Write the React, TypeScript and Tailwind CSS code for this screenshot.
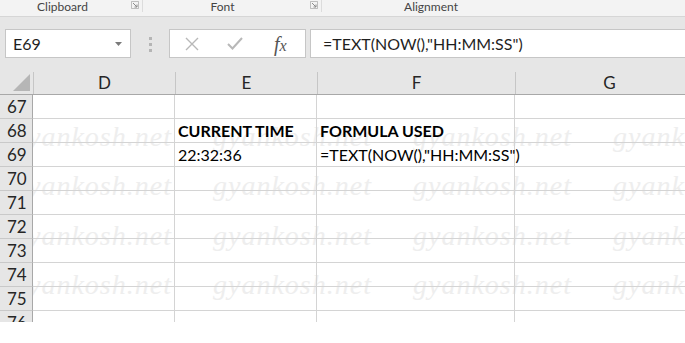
import React from "react";

const rows = [67, 68, 69, 70, 71, 72, 73, 74, 75, 76];
const marks = [137, 186, 236, 285, 334];

function Launcher() {
  return (
    <svg width="8" height="8" viewBox="0 0 8 8" className="text-[#8a8a8a]">
      <path d="M0.5 0.5h7v7h-7z" fill="none" stroke="currentColor" strokeWidth="1" opacity="0.5" />
      <path d="M2 2l4 4M6 3.5V6H3.5" fill="none" stroke="currentColor" strokeWidth="1" />
    </svg>
  );
}

export default function App() {
  return (
    <div className="w-[685px] h-[343px] overflow-hidden bg-white font-['Lato','Liberation_Sans',sans-serif] text-[#1f1f1f]">
      {/* ribbon group labels */}
      <div className="h-[17px] flex bg-[#f3f3f3] border-b border-[#d6d6d6] text-[12px] leading-[13px] text-[#444]">
        <div className="w-[143px] flex items-start border-r border-[#dcdcdc] h-[12px]">
          <span className="flex-1 text-center pr-[6px]">Clipboard</span>
          <span className="pr-[3px] pt-[1px]"><Launcher /></span>
        </div>
        <div className="w-[179px] flex items-start border-r border-[#dcdcdc] h-[12px]">
          <span className="flex-1 text-center pr-[8px]">Font</span>
          <span className="pr-[3px] pt-[1px]"><Launcher /></span>
        </div>
        <div className="w-[218px] text-center">Alignment</div>
      </div>

      {/* name box + formula bar */}
      <div className="h-[55px] bg-[#e6e6e6] flex items-start pt-[12px]">
        <div className="ml-[5px] w-[126px] h-[29px] bg-white border border-[#c6c6c6] flex items-center pl-[7px] pr-[8px] text-[16px]">
          <span className="flex-1">E69</span>
          <svg width="7" height="4" viewBox="0 0 7 4"><path d="M0 0h7L3.5 4z" fill="#7a7a7a" /></svg>
        </div>
        <div className="w-[38px] h-[29px] flex flex-col items-center justify-center gap-[3px] pt-[2px]">
          <div className="w-[3px] h-[3px] bg-[#b5b5b5]" />
          <div className="w-[3px] h-[3px] bg-[#b5b5b5]" />
          <div className="w-[3px] h-[3px] bg-[#b5b5b5]" />
        </div>
        <div className="w-[137px] h-[29px] bg-white border border-[#c6c6c6] flex items-center">
          <svg width="14" height="14" viewBox="0 0 14 14" className="ml-[15px]">
            <path d="M1 1l12 12M13 1L1 13" stroke="#b8b8b8" strokeWidth="1.4" fill="none" />
          </svg>
          <svg width="16" height="13" viewBox="0 0 16 13" className="ml-[28px]">
            <path d="M1 7l4.5 4.5L15 1" stroke="#b8b8b8" strokeWidth="2" fill="none" />
          </svg>
          <span className="ml-[31px] font-['Liberation_Serif',serif] italic text-[20px] text-[#555] leading-none">
            f<span className="text-[16px]">x</span>
          </span>
        </div>
        <div className="ml-[4px] flex-1 h-[29px] bg-white border border-[#c6c6c6] border-r-0 flex items-center pl-[12px] text-[16px]">
          =TEXT(NOW(),"HH:MM:SS")
        </div>
      </div>

      {/* sheet */}
      <div className="h-[250px] overflow-hidden relative">
        {/* watermark, behind the cells */}
        <div className="absolute left-[33px] top-[23px] right-0 bottom-0 overflow-hidden pointer-events-none">
          {marks.map((y) => (
            <div key={y} className="absolute left-[-20px] flex gap-[43px] whitespace-nowrap" style={{ top: y - 95 - 14 }}>
              {[0, 1, 2, 3].map((i) => (
                <span key={i} className="w-[157px] font-['Liberation_Serif',serif] italic text-[28px] leading-none text-[#eeeeee] tracking-[1px]">
                  gyankosh.net
                </span>
              ))}
            </div>
          ))}
        </div>

        <div className="relative h-[23px] flex bg-[#e6e6e6] border-b border-[#a8a8a8] text-[17px] leading-[22px] text-[#262626]">
          <div className="w-[33px] flex items-end justify-end pr-[3px] pb-[3px]">
            <svg width="17" height="17" viewBox="0 0 17 17"><path d="M17 0v17H0z" fill="#b6b6b6" /></svg>
          </div>
          <div className="w-[142px] border-l border-[#c6c6c6] text-center">D</div>
          <div className="w-[142px] border-l border-[#c6c6c6] text-center">E</div>
          <div className="w-[198px] border-l border-[#c6c6c6] text-center">F</div>
          <div className="flex-1 border-l border-[#c6c6c6] text-center pl-[18px]">G</div>
        </div>

        {rows.map((r) => (
          <div key={r} className="relative h-[24px] flex text-[16px] leading-[23px]">
            <div className="w-[33px] bg-[#e6e6e6] border-b border-[#c9c9c9] border-r border-r-[#a8a8a8] pl-[7px] text-[17px] text-[#262626]">
              {r}
            </div>
            <div className="w-[142px] border-b border-r border-[#d4d4d4]" />
            <div className="w-[142px] border-b border-r border-[#d4d4d4] pl-[3px] text-black">
              {r === 68 && <span className="font-bold">CURRENT TIME</span>}
              {r === 69 && "22:32:36"}
            </div>
            <div className="w-[198px] border-b border-r border-[#d4d4d4] pl-[3px] text-black whitespace-nowrap">
              {r === 68 && <span className="font-bold">FORMULA USED</span>}
              {r === 69 && '=TEXT(NOW(),"HH:MM:SS")'}
            </div>
            <div className="flex-1 border-b border-[#d4d4d4]" />
          </div>
        ))}
      </div>
    </div>
  );
}
